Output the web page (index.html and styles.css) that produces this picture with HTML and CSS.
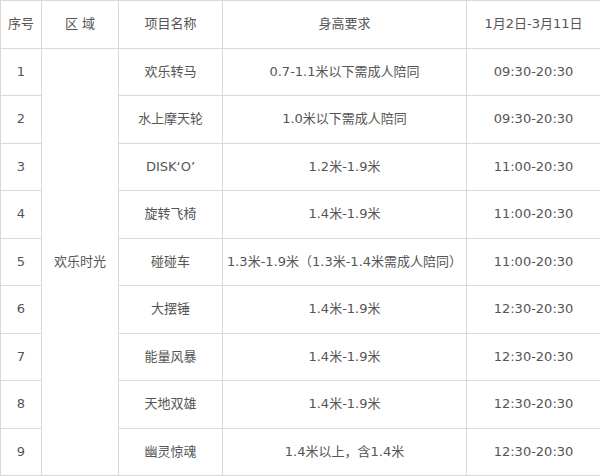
FILE: index.html
```html
<!DOCTYPE html>
<html>
<head>
<meta charset="utf-8">
<link rel="stylesheet" href="styles.css">
</head>
<body>
<table class="sched">
  <colgroup>
    <col class="c1"><col class="c2"><col class="c3"><col class="c4"><col class="c5">
  </colgroup>
  <tr class="head"><td>序号</td><td>区&nbsp;域</td><td>项目名称</td><td>身高要求</td><td>1月2日-3月11日</td></tr>
  <tr><td>1</td><td rowspan="9">欢乐时光</td><td>欢乐转马</td><td>0.7-1.1米以下需成人陪同</td><td>09:30-20:30</td></tr>
  <tr><td>2</td><td>水上摩天轮</td><td>1.0米以下需成人陪同</td><td>09:30-20:30</td></tr>
  <tr><td>3</td><td>DISK‘O’</td><td>1.2米-1.9米</td><td>11:00-20:30</td></tr>
  <tr><td>4</td><td>旋转飞椅</td><td>1.4米-1.9米</td><td>11:00-20:30</td></tr>
  <tr><td>5</td><td>碰碰车</td><td>1.3米-1.9米（1.3米-1.4米需成人陪同）</td><td>11:00-20:30</td></tr>
  <tr><td>6</td><td>大摆锤</td><td>1.4米-1.9米</td><td>12:30-20:30</td></tr>
  <tr><td>7</td><td>能量风暴</td><td>1.4米-1.9米</td><td>12:30-20:30</td></tr>
  <tr><td>8</td><td>天地双雄</td><td>1.4米-1.9米</td><td>12:30-20:30</td></tr>
  <tr><td>9</td><td>幽灵惊魂</td><td>1.4米以上，含1.4米</td><td>12:30-20:30</td></tr>
</table>
</body>
</html>
```
FILE: styles.css
```css
html, body {
  margin: 0;
  padding: 0;
  background: #fff;
}
.sched {
  border-collapse: collapse;
  table-layout: fixed;
  width: 600px;
  font-family: "DejaVu Sans", "Noto Sans CJK SC", sans-serif;
  font-size: 13px;
  color: #555;
}
.c1 { width: 41px; }
.c2 { width: 77px; }
.c3 { width: 104px; }
.c4 { width: 244px; }
.c5 { width: 134px; }
.sched td {
  border: 1px solid #d9d9d9;
  text-align: center;
  vertical-align: middle;
  padding: 0;
  height: 46.5px;
  line-height: 18px;
  white-space: nowrap;
}
```
